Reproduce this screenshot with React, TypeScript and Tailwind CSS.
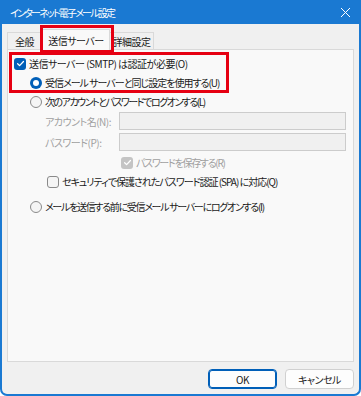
import React from 'react';

const font = "font-['Noto_Sans_CJK_JP','Noto_Sans',sans-serif] [font-feature-settings:'palt']";

function Check({ checked, disabled }: { checked?: boolean; disabled?: boolean }) {
  if (!checked) {
    return <span className="w-[12px] h-[12px] rounded-[3px] border border-[#8a8a8a] bg-[#f5f5f5] shrink-0" />;
  }
  return (
    <span
      className={`w-[12px] h-[12px] rounded-[3px] shrink-0 flex items-center justify-center ${
        disabled ? 'bg-[#c4c4c4]' : 'bg-[#005fb8]'
      }`}
    >
      <svg width="9" height="9" viewBox="0 0 10 10" fill="none">
        <path d="M1.8 5.2l2.2 2.2 4.3-4.6" stroke="white" strokeWidth="1.4" strokeLinecap="round" strokeLinejoin="round" />
      </svg>
    </span>
  );
}

function Radio({ checked }: { checked?: boolean }) {
  if (checked) {
    return (
      <span className="w-[12px] h-[12px] rounded-full bg-[#005fb8] shrink-0 flex items-center justify-center">
        <span className="w-[6px] h-[6px] rounded-full bg-white" />
      </span>
    );
  }
  return <span className="w-[12px] h-[12px] rounded-full border border-[#8a8a8a] bg-[#f5f5f5] shrink-0" />;
}

export default function App() {
  return (
    <div className={`w-[361px] h-[396px] bg-[#f0f0f0] border-2 border-t-0 border-[#1a79d2] rounded-b-[7px] flex flex-col overflow-hidden text-[10px] tracking-[-0.5px] whitespace-nowrap text-[#1a1a1a] ${font}`}>
      {/* Title bar */}
      <div className="h-[24px] bg-[#1a79d2] text-white flex items-center justify-between pl-[8px] pr-[8px] text-[10px] shrink-0">
        <span className="tracking-[-1.8px]">インターネット電子メール設定</span>
        <svg width="11" height="11" viewBox="0 0 11 11">
          <path d="M1 1l9 9M10 1l-9 9" stroke="white" strokeWidth="1" />
        </svg>
      </div>

      {/* Tabs */}
      <div className="relative flex items-end pl-[5px] pt-[5px] h-[25px] shrink-0">
        <div className="h-[17px] w-[35px] border border-b-0 border-[#d9d9d9] bg-[#f0f0f0] flex items-center justify-center">全般</div>
        <div className="h-[21px] w-[68px] border border-b-0 border-[#d9d9d9] bg-[#f9f9f9] flex items-center justify-center -mb-px relative z-10">送信サーバー</div>
        <div className="h-[17px] w-[44px] border border-b-0 border-l-0 border-[#d9d9d9] bg-[#f0f0f0] flex items-center justify-center">詳細設定</div>
        <div className="absolute left-[38px] top-[1px] w-[74px] h-[28px] border-[3px] border-[#e60012] z-20" />
      </div>

      {/* Panel */}
      <div className="relative mx-[5px] h-[313px] border border-[#d9d9d9] bg-[#f9f9f9] pl-[6px] pt-[4px] shrink-0">
        <div className="absolute left-[1px] top-[2px] w-[220px] h-[41px] border-[3px] border-[#e60012]" />

        <div className="h-[19px] flex items-center gap-[3px]">
          <Check checked />
          <span>送信サーバー (SMTP) は認証が必要(O)</span>
        </div>
        <div className="h-[19px] flex items-center gap-[3px] pl-[16px]">
          <Radio checked />
          <span className="tracking-[-1px]">受信メール サーバーと同じ設定を使用する(U)</span>
        </div>
        <div className="h-[19px] flex items-center gap-[3px] pl-[16px]">
          <Radio />
          <span className="tracking-[-1.5px]">次のアカウントとパスワードでログオンする(L)</span>
        </div>

        <div className="mt-[1px] flex flex-col gap-[3px] pl-[31px] pr-[7px] text-[#a0a0a0]">
          <div className="flex items-center h-[18px]">
            <span className="w-[74px]">アカウント名(N):</span>
            <div className="flex-1 h-[18px] border border-[#cccccc] bg-[#f0f0f0]" />
          </div>
          <div className="flex items-center h-[18px]">
            <span className="w-[74px]">パスワード(P):</span>
            <div className="flex-1 h-[18px] border border-[#cccccc] bg-[#f0f0f0]" />
          </div>
        </div>

        <div className="h-[19px] mt-[2px] flex items-center gap-[3px] pl-[107px] text-[#a0a0a0]">
          <Check checked disabled />
          <span className="tracking-[-1.3px]">パスワードを保存する(R)</span>
        </div>
        <div className="h-[19px] flex items-center gap-[3px] pl-[33px]">
          <Check />
          <span className="tracking-[-1px]">セキュリティで保護されたパスワード認証 (SPA) に対応(Q)</span>
        </div>

        <div className="h-[19px] mt-[6px] flex items-center gap-[3px] pl-[16px]">
          <Radio />
          <span className="tracking-[-1.3px]">メールを送信する前に受信メール サーバーにログオンする(I)</span>
        </div>
      </div>

      {/* Buttons */}
      <div className="flex justify-end gap-[8px] pr-[5px] pt-[7px]">
        <button className="w-[69px] h-[20px] rounded-[4px] border border-[#005fb8] bg-[#fdfdfd] shadow-[inset_0_0_0_1px_#005fb8] flex items-center justify-center">OK</button>
        <button className="w-[69px] h-[20px] rounded-[4px] border border-[#d0d0d0] bg-[#fdfdfd] flex items-center justify-center">キャンセル</button>
      </div>
    </div>
  );
}
